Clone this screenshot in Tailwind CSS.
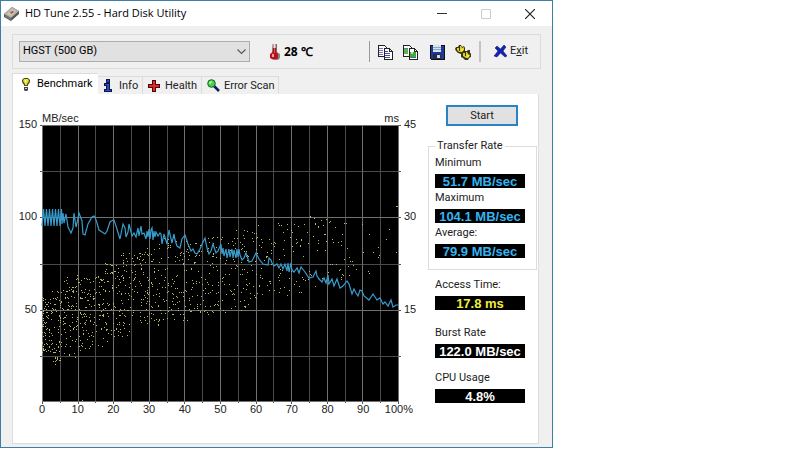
<!DOCTYPE html>
<html lang="en">
  <head>
    <meta charset="UTF-8" />
    <meta name="viewport" content="width=device-width, initial-scale=1.0" />
    <title>HD Tune 2.55 - Hard Disk Utility</title>
    <script src="https://cdn.jsdelivr.net/npm/@tailwindcss/browser@4"></script>
  </head>
  <body class="bg-white font-['Liberation_Sans',sans-serif] text-[11px] text-[#222]">
    <div class="w-full max-w-[553px] border border-[#3a80a6] bg-[#f0f0f0]">
      <!-- Title bar -->
      <header class="flex h-[25px] items-center bg-white pl-[3px] pr-[17px]">
        <svg class="size-4 shrink-0" viewBox="0 0 16 16">
          <path d="M0 8 8 1l7 4v3l-8 7-7-4z" fill="#555" />
          <path d="M0 8 8 1l7 4-8 7z" fill="#b5b1ac" />
          <path d="M3 8 8 3l4 2-5 5z" fill="#d9c3b0" />
          <path d="M6 6l3-1 1 1-3 2z" fill="#8a5f48" />
          <path d="M1 9l6 3v2l-6-3z" fill="#77777c" />
        </svg>
        <h1 class="ml-[5px] grow font-['Open_Sans',sans-serif] text-[11px] text-black">HD Tune 2.55 - Hard Disk Utility</h1>
        <div class="flex gap-[34px]">
          <button aria-label="Minimize"><svg class="size-[10px]" viewBox="0 0 10 10"><path d="M0 4.500h10" stroke="#333" /></svg></button>
          <button aria-label="Maximize" disabled><svg class="size-[10px]" viewBox="0 0 10 10"><path d="M.5.5h9v9h-9z" fill="none" stroke="#ccc" /></svg></button>
          <button aria-label="Close"><svg class="size-[10px]" viewBox="0 0 10 10"><path d="M0 0l10 10M10 0 0 10" stroke="#222" stroke-width="1.2" /></svg></button>
        </div>
      </header>

      <div class="px-[11px] pb-[3px] pt-2">
        <!-- Toolbar -->
        <div class="flex h-[35px] items-center border border-[#dcdcdc] pl-[6px] pr-3">
          <div class="relative w-[231px]">
            <select aria-label="Drive" class="block h-[21px] w-full appearance-none border border-[#adadad] bg-[#e1e1e1] pl-[3px] font-['Roboto',sans-serif] text-[11px] text-black">
              <option>HGST (500 GB)</option>
            </select>
            <svg class="pointer-events-none absolute right-1 top-2 h-[6px] w-[9px]" viewBox="0 0 9 6"><path d="M.5.5l4 4 4-4" fill="none" stroke="#555" stroke-width="1.1" /></svg>
          </div>
          <svg class="ml-5 h-4 w-[10px]" viewBox="0 0 10 16">
            <path d="M3 0h4v8l3 2v4l-2 2H3l-2-2z" fill="#8e8482" />
            <path d="M3 0h3v8l2 2v4l-1 1H2l-2-1v-4l3-2z" fill="#b8121a" />
            <path d="M3 0h3v4H3z" fill="#e8dcd8" />
            <path d="M3 0v9M6 0v9" stroke="#6d2a2a" stroke-width=".6" />
            <path d="M2 10h2v3H2z" fill="#ff9c96" />
            <path d="M4 4h1v5H4z" fill="#ef4a4c" />
          </svg>
          <span class="ml-1 font-['Open_Sans',sans-serif] text-[12px] font-bold text-black">28 ℃</span>
          <div class="ml-auto flex h-[21px] items-center border-l border-[#999] pl-[7px]">
            <button aria-label="Copy information"><svg class="size-4" viewBox="0 0 16 16" shape-rendering="crispEdges">
              <path d="M1 1h6l2 2v9H1z" fill="#fff" stroke="#222" />
              <path d="M2 4h4M2 6h4M2 8h4M2 10h4" stroke="#7770c4" />
              <path d="M7 4h5l3 3v8H7z" fill="#fff" stroke="#222" />
              <path d="M12 4v3h3" fill="none" stroke="#222" />
              <path d="M8 7h3M8 9h5M8 11h5M8 13h5" stroke="#4d48b0" />
            </svg></button>
            <button aria-label="Copy screenshot" class="ml-[9px]"><svg class="size-4" viewBox="0 0 16 16" shape-rendering="crispEdges">
              <path d="M1 1h6l2 2v9H1z" fill="#fff" stroke="#222" />
              <path d="M2 5h4v5H2z" fill="#55b948" />
              <path d="M2 4h4" stroke="#6b6bc0" />
              <path d="M7 4h5l3 3v8H7z" fill="#fff" stroke="#222" />
              <path d="M12 4v3h3" fill="none" stroke="#222" />
              <path d="M8 8h6v5H8z" fill="#42a83c" />
              <path d="M9 8h2v2H9z" fill="#a8e698" />
              <path d="M8 13h6" stroke="#3d6b9c" />
            </svg></button>
            <button aria-label="Save" class="ml-[11px]"><svg class="size-4" viewBox="0 0 16 16" shape-rendering="crispEdges">
              <path d="M1 1h14v14H2l-1-1z" fill="#1c3a9e" stroke="#111" />
              <path d="M4 1h8v7H4z" fill="#d4e4ee" />
              <path d="M4 3h8M4 5h8" stroke="#91a6bc" />
              <path d="M4 10h8v5H4z" fill="#262c48" />
              <path d="M8 11h3v3H8z" fill="#ddd" />
            </svg></button>
            <button aria-label="Options" class="ml-[10px]"><svg class="size-4" viewBox="0 0 16 16">
              <path d="M1 3h2l1-2h2l1 2 2-1 1 2v3h2l1-1h2v3l2 1-1 3-2 1-1 2h-3l-2-2-2-1v-3l-3-1-2-2-1-2z" fill="#3a3710" />
              <path d="M2 4h2v3h1V2h1l1 2 2-1v3L7 8H4L2 6z" fill="#ddd22c" />
              <path d="M8 9h2v3h1V8h1l1 2 2 1-1 2-1 1h-2l-3-2z" fill="#ddd22c" />
              <path d="M7 5v2M13 11v2" stroke="#fff79a" />
            </svg></button>
            <div class="ml-2 h-[21px] w-[2px] bg-[#c4c4c4]"></div>
            <button class="ml-[13px] flex items-center font-['Roboto',sans-serif] text-[11px]">
              <svg class="mr-[3px] size-[13px]" viewBox="0 0 13 13"><path d="M1 3l2-2 3.500 3L10 0l2 2-3 4 4 5-2 1-4.500-4L3 12l-3-1 4-5z" fill="#1324b4" stroke="#06105c" stroke-width=".5" /></svg>
              <span>E<u>x</u>it</span>
            </button>
          </div>
        </div>

        <!-- Tabs -->
        <nav class="mt-[4px] flex h-[21px] items-end font-['Roboto',sans-serif] text-[11px] leading-[18px]" role="tablist">
          <button role="tab" aria-selected="true" class="flex h-[21px] w-[86px] items-center border-l border-t border-[#dcdcdc] bg-white pl-[9px] text-black">
            <svg class="mr-[7px] h-[13px] w-2 shrink-0" viewBox="0 0 8 13">
              <path d="M2 0h4l2 2v2L6 7v1H2V7L0 4V2z" fill="#4f4d10" />
              <path d="M2 1h4l1 2-2 3v1H3V6L1 3z" fill="#e3e03a" />
              <path d="M3 2h1v2H3z" fill="#fff" />
              <path d="M2 9h4v3l-1 1H3l-1-1z" fill="#444" />
              <path d="M3 10h2v1H3z" fill="#ccc" />
            </svg>
            Benchmark
          </button>
          <button role="tab" class="flex h-[18px] w-[45px] items-center border-r border-t border-[#dcdcdc] pl-[6px]">
            <svg class="mr-[7px] h-[13px] w-2 shrink-0" viewBox="0 0 8 13">
              <path d="M2 0h4v4H2zM0 4h6v6h2v3H0v-3h2V7H0z" fill="#0c1746" />
              <path d="M3 1h2v2H3zM1 5h4v6h2v1H1v-1h2V6H1z" fill="#2a49c8" />
            </svg>
            Info
          </button>
          <button role="tab" class="flex h-[18px] w-[59px] items-center border-r border-t border-[#dcdcdc] pl-[5px]">
            <svg class="mr-[5px] size-3 shrink-0" viewBox="0 0 12 12">
              <path d="M4 0h4v4h4v4H8v4H4V8H0V4h4z" fill="#420a0a" />
              <path d="M5 1h2v4h4v2H7v4H5V7H1V5h4z" fill="#e8262a" />
            </svg>
            Health
          </button>
          <button role="tab" class="flex h-[18px] w-[77px] items-center border-r border-t border-[#dcdcdc] pl-[5px]">
            <svg class="mr-[4px] size-[13px] shrink-0" viewBox="0 0 13 13">
              <path d="M7 7l5 5" stroke="#10185e" stroke-width="2.500" />
              <circle cx="4.500" cy="4.500" r="3.800" fill="#46d34a" stroke="#12641a" />
              <path d="M2.500 4.500l2-2" stroke="#e4ffe0" stroke-width="1.300" />
            </svg>
            <span class="whitespace-nowrap">Error Scan</span>
          </button>
        </nav>

        <!-- Benchmark panel -->
        <main class="mr-[2px] flex min-h-[350px] border border-t-0 border-[#dcdcdc] bg-white pb-[25px] pt-[17px]">
          <section class="grid grow grid-cols-[29px_1fr_29px] grid-rows-[14px_277px_16px]">
            <div class="col-start-2 row-start-1 flex justify-between leading-[14px]"><span>MB/sec</span><span>ms</span></div>
            <div class="col-start-1 row-start-2 flex flex-col text-right leading-none">
              <div class="flex h-1/3 items-start justify-end pr-[5px]"><span class="-mt-[6px]">150</span></div>
              <div class="flex h-1/3 items-start justify-end pr-[5px]"><span class="-mt-[6px]">100</span></div>
              <div class="flex h-1/3 items-start justify-end pr-[5px]"><span class="-mt-[6px]">50</span></div>
            </div>
            <svg class="col-start-2 row-start-2 h-full w-full overflow-visible bg-black" viewBox="0 0 357 277" preserveAspectRatio="none">
              <g fill="none" stroke-width="1" shape-rendering="crispEdges">
                <path id="minor-grid" stroke="#4b4b4b" />
                <path id="major-grid" stroke="#707070" />
                <path d="M.5 0v277M0 .5h357M356.500 0v277M0 276.500h357" stroke="#707070" />
                <path id="ticks" stroke="#555" />
                <path id="access" stroke="#b9b963" />
              </g>
              <polyline id="transfer" fill="none" stroke="#389ccd" stroke-width="1.200" />
            </svg>
            <div class="col-start-3 row-start-2 flex flex-col leading-none">
              <div class="h-1/3 pl-[5px]"><span class="-mt-[6px] block">45</span></div>
              <div class="h-1/3 pl-[5px]"><span class="-mt-[6px] block">30</span></div>
              <div class="h-1/3 pl-[5px]"><span class="-mt-[6px] block">15</span></div>
            </div>
            <div class="col-start-2 row-start-3 flex justify-between leading-[14px]">
              <span class="flex w-0 justify-center">0</span>
              <span class="flex w-0 justify-center">10</span>
              <span class="flex w-0 justify-center">20</span>
              <span class="flex w-0 justify-center">30</span>
              <span class="flex w-0 justify-center">40</span>
              <span class="flex w-0 justify-center">50</span>
              <span class="flex w-0 justify-center">60</span>
              <span class="flex w-0 justify-center">70</span>
              <span class="flex w-0 justify-center">80</span>
              <span class="flex w-0 justify-center">90</span>
              <span class="flex w-0 justify-center">100%</span>
            </div>
          </section>

          <aside class="-mt-[6px] mr-[1px] w-[109px] shrink-0 font-['Roboto',sans-serif] text-[11px]">
            <button class="ml-[18px] block h-[21px] w-[72px] border-2 border-[#2a83c4] bg-[#e1e1e1] text-center leading-4">Start</button>
            <fieldset class="mt-[13px] border border-[#dcdcdc] pb-[11px] pl-[6px]">
              <legend class="px-[2px] leading-[14px]">Transfer Rate</legend>
              <label for="minimum" class="block h-[21px] leading-[20px]">Minimum</label>
              <output id="minimum" class="block h-[14px] w-[90px] bg-black text-center font-['Liberation_Sans',sans-serif] text-[13px] font-bold leading-[15px] text-[#35b4f0]">51.7 MB/sec</output>
              <label for="maximum" class="block h-[21px] leading-[20px]">Maximum</label>
              <output id="maximum" class="block h-[14px] w-[90px] bg-black text-center font-['Liberation_Sans',sans-serif] text-[13px] font-bold leading-[15px] text-[#35b4f0]">104.1 MB/sec</output>
              <label for="average" class="block h-[21px] leading-[20px]">Average:</label>
              <output id="average" class="block h-[14px] w-[90px] bg-black text-center font-['Liberation_Sans',sans-serif] text-[13px] font-bold leading-[15px] text-[#35b4f0]">79.9 MB/sec</output>
            </fieldset>
            <div class="pl-[7px]">
              <label for="access-time" class="mt-[5px] block h-[21px] leading-[20px]">Access Time:</label>
              <output id="access-time" class="block h-[14px] w-[90px] bg-black text-center font-['Liberation_Sans',sans-serif] text-[13px] font-bold leading-[15px] text-[#f2ee3c]">17.8 ms</output>
              <label for="burst-rate" class="mt-[13px] block h-[21px] leading-[20px]">Burst Rate</label>
              <output id="burst-rate" class="block h-[14px] w-[90px] bg-black text-center font-['Liberation_Sans',sans-serif] text-[13px] font-bold leading-[15px] text-white">122.0 MB/sec</output>
              <label for="cpu-usage" class="mt-[10px] block h-[21px] leading-[20px]">CPU Usage</label>
              <output id="cpu-usage" class="block h-[14px] w-[90px] bg-black text-center font-['Liberation_Sans',sans-serif] text-[13px] font-bold leading-[15px] text-white">4.8%</output>
            </div>
          </aside>
        </main>
      </div>
    </div>

    <script>
      const W = 357;
      const H = 277;

      drawGrid();
      drawTransfer();
      drawAccess();

      function drawGrid() {
        let minor = "";
        let major = "";
        let ticks = "";
        for (let i = 0; i <= 20; i++) {
          const x = Math.round(((W - 1) * i) / 20) + 0.5;
          if (i % 2) minor += `M${x} 0v${H}`;
          else major += `M${x} 0v${H}`;
          ticks += `M${x} ${H}v${i % 2 ? 1 : 2}`;
        }
        for (let i = 0; i < 6; i++) {
          const y = Math.round((H * i) / 6) + 0.5;
          if (i % 2) minor += `M0 ${y}h${W}`;
          else major += `M0 ${y}h${W}`;
          ticks += `M-2 ${y}h2M${W} ${y}h2`;
        }
        document.getElementById("minor-grid").setAttribute("d", minor);
        document.getElementById("major-grid").setAttribute("d", major);
        document.getElementById("ticks").setAttribute("d", ticks);
      }

      // Transfer rate samples, x y in plot units
      function drawTransfer() {
        const points = [];
        for (let x = 0; x < 19; x += 3) points.push([x, 101], [x + 1.5, 84]);
        points.push(
          [20, 99], [21, 88], [22, 98], [24, 89], [26, 102], [29, 108], [31, 103],
          [32, 88], [34, 102], [35, 98], [37, 88], [40, 96], [41, 109], [43, 110],
          [46, 99], [50, 92], [52, 91], [53, 92], [55, 98], [57, 105], [60, 107], [63, 109],
          [65, 106], [68, 97], [71, 95], [72, 95], [74, 101], [78, 114], [81, 99], [83, 103],
          [84, 112], [86, 107], [87, 99], [90, 111], [92, 108], [94, 112], [96, 103], [97, 111],
          [99, 101], [100, 109], [102, 108], [104, 114], [105, 106], [106, 112], [107, 104],
          [108, 114], [109, 105], [110, 103], [111, 115], [112, 106], [113, 112], [114, 107],
          [116, 111], [118, 108], [119, 109], [120, 119], [122, 109], [125, 119], [127, 105],
          [130, 118], [132, 109], [133, 115], [135, 121], [138, 123], [140, 114], [143, 110],
          [146, 119], [149, 126], [151, 124], [153, 128], [155, 129], [158, 124], [161, 117],
          [163, 113], [165, 123], [167, 129], [169, 126], [171, 119], [174, 128], [176, 126],
          [179, 119], [180, 129], [181, 123], [182, 131], [184, 124], [185, 133], [187, 124],
          [188, 132], [190, 124], [191, 133], [192, 125], [194, 133], [195, 124], [196, 132],
          [197, 124], [198, 130], [200, 135], [202, 133], [204, 128], [207, 137], [210, 136],
          [214, 128], [217, 134], [221, 139], [226, 140], [227, 133], [229, 135], [230, 138],
          [232, 141], [235, 139], [237, 143], [239, 139], [241, 144], [243, 139], [245, 146],
          [246, 138], [247, 147], [249, 138], [250, 145], [252, 147], [255, 143], [257, 148],
          [259, 142], [263, 147], [267, 153], [271, 152], [274, 146], [275, 151], [277, 154],
          [280, 157], [282, 153], [284, 158], [286, 150], [287, 159], [290, 154], [292, 161],
          [295, 154], [298, 163], [301, 161], [305, 156], [307, 159], [310, 169], [312, 164],
          [314, 168], [316, 171], [318, 165], [320, 166], [322, 171], [327, 175], [331, 169],
          [335, 175], [338, 173], [341, 179], [343, 177], [346, 181], [349, 175], [351, 182],
          [354, 180], [357, 180]
        );
        document.getElementById("transfer").setAttribute("points", points.join(" "));
      }

      // Access time dots: [x, top, bottom, dots in the band that starts at x]
      function drawAccess() {
        const bands = [
          [0, 172, 228, 75], [10, 165, 242, 68], [22, 152, 233, 72], [35, 150, 226, 66],
          [48, 150, 222, 68], [62, 138, 212, 58], [75, 126, 212, 66], [89, 127, 200, 54],
          [103, 120, 201, 60], [117, 112, 196, 56], [132, 116, 198, 48], [146, 118, 193, 46],
          [160, 110, 192, 42], [175, 112, 188, 34], [190, 104, 186, 50], [205, 100, 180, 38],
          [220, 101, 178, 24], [235, 98, 172, 26], [250, 97, 170, 24], [265, 90, 162, 22],
          [283, 94, 160, 22], [300, 98, 152, 14], [320, 96, 150, 9], [340, 102, 130, 3],
          [357]
        ];
        let seed = 29;
        const random = () => (seed = (seed * 16807) % 2147483647) / 2147483647;
        let d = "M354 81.5h1.500M40 275.5h1M268 91.5h1M65 216.5h1";
        for (let i = 0; i < bands.length - 1; i++) {
          const [x, top, bottom, count] = bands[i];
          for (let n = 0; n < count; n++) {
            const px = Math.floor(x + random() * (bands[i + 1][0] - x));
            const py = Math.floor(top + random() * (bottom - top)) + 0.5;
            d += `M${px} ${py}h1`;
          }
        }
        document.getElementById("access").setAttribute("d", d);
      }
    </script>
  </body>
</html>
